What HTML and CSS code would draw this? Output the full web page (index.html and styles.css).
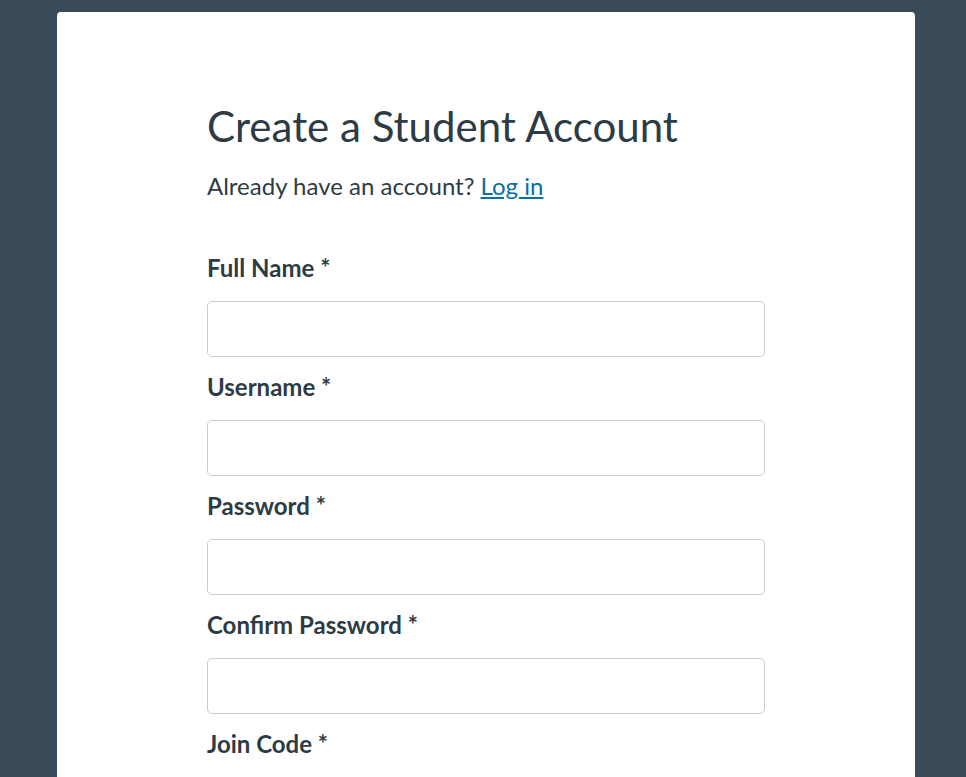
FILE: index.html
```html
<!doctype html>
<html lang="en">
<head>
	<meta charset="UTF-8">
	<title>Create a Student Account</title>
	<link rel="stylesheet" href="styles.css">
</head>
<body>
	<div class="card">
		<h1 class="title">Create a Student Account</h1>
		<p class="sub">Already have an account? <a href="#">Log in</a></p>
		<form class="form">
			<label class="field">
				<span class="label">Full Name *</span>
				<input type="text" class="input">
			</label>
			<label class="field">
				<span class="label">Username *</span>
				<input type="text" class="input">
			</label>
			<label class="field">
				<span class="label">Password *</span>
				<input type="password" class="input">
			</label>
			<label class="field">
				<span class="label">Confirm Password *</span>
				<input type="password" class="input">
			</label>
			<label class="field">
				<span class="label">Join Code *</span>
				<input type="text" class="input">
			</label>
		</form>
	</div>
</body>
</html>
```
FILE: styles.css
```css
*{
	margin: 0;
	padding: 0;
	box-sizing: border-box;
}
body{
	background-color: #394b58;
	font-family: Lato, "Noto Sans", sans-serif;
	color: #2d3b45;
	overflow: hidden;
}
.card{
	background-color: #fff;
	margin: 12px 51px 0 57px;
	padding: 88px 150px 60px;
	border-radius: 4px 4px 0 0;
	min-height: 900px;
}
.title{
	font-size: 42px;
	font-weight: 400;
	line-height: 52px;
}
.sub{
	font-size: 24px;
	line-height: 30px;
	margin-top: 19px;
}
.sub a{
	color: #0770a3;
	text-decoration: underline;
}
.form{
	margin-top: 52px;
	display: flex;
	flex-direction: column;
	gap: 15px;
}
.field{
	display: flex;
	flex-direction: column;
	gap: 18px;
}
.label{
	font-size: 24px;
	font-weight: 700;
	line-height: 30px;
}
.input{
	height: 56px;
	width: 100%;
	border: 1px solid #c7cdd1;
	border-radius: 5px;
	background: #fff;
	font: inherit;
	padding: 0 12px;
}
```
